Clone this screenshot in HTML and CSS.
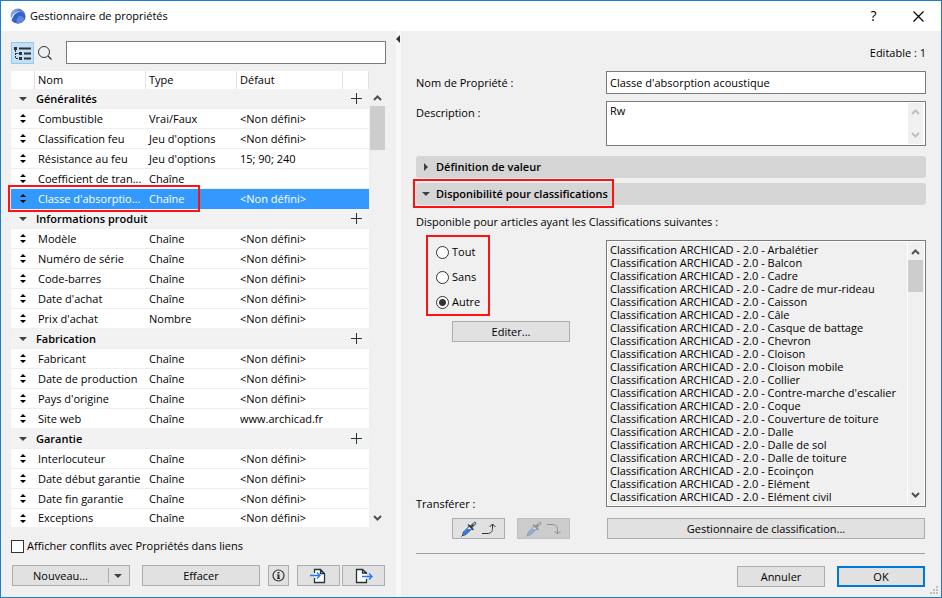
FILE: index.html
```
<!DOCTYPE html>
<html lang="fr">
<head>
    <meta charset="UTF-8">
    <title>Gestionnaire de propriétés</title>
    <link rel="stylesheet" href="styles.css">
</head>
<body>
<svg class="symbols">
    <symbol id="up" viewBox="0 0 9 6"><path d="M1 5 4.500 1.500 8 5" fill="none" stroke="currentColor" stroke-width="2"/></symbol>
    <symbol id="down" viewBox="0 0 9 6"><path d="M1 1 4.500 4.500 8 1" fill="none" stroke="currentColor" stroke-width="2"/></symbol>
    <symbol id="tri" viewBox="0 0 8 4"><path d="M0 0h8L4 4z" fill="#404040"/></symbol>
    <symbol id="sort" viewBox="0 0 6 9"><path d="M3 0 6 3H0zM3 9 0 6h6z" fill="#000"/></symbol>
    <symbol id="plus" viewBox="0 0 11 11"><path d="M5.500 0v11M0 5.500h11" stroke="#26323c"/></symbol>
    <symbol id="pipette" viewBox="0 0 16 16">
        <path d="M1.500 14.500 2.500 11 9 4.500 11.500 7 5 13.500z" fill="#e8eef2" stroke="#26323c"/>
        <path d="M2 14 3 11.300 6.300 8h4L4.800 13.200z" fill="#1e78ff"/>
        <path d="M7 3.500l5.500 5.500M9.500 6.500 12.500 3.500" fill="none" stroke="#26323c" stroke-width="1.200"/>
        <path d="M9.500 5 13 1.500c1-1 2.500.5 1.500 1.500L11 6.500" fill="none" stroke="#26323c"/>
        <path d="M.5 15.500 2 14" stroke="#26323c"/>
    </symbol>
</svg>
<div class="dialog">
    <header class="titlebar">
        <svg class="logo" width="16" height="16" viewBox="0 0 16 16">
            <path d="M1 11C-.5 5 3 .5 8 .5c1.500 0 3 .5 4 1.200C7 2 3 5.500 1 11z" fill="#7c9fe0"/>
            <path d="M1.500 12.500C3 7 6.500 3.500 10 3.500c3 0 5 2 5.500 5 0 4-3.500 7-7.500 7-2.500 0-5-1-6.500-3z" fill="#3560c6"/>
            <path d="M9 1.200c4 .3 6.500 3.300 6.600 7.300C14.500 5 12 3 8.500 3.500 6.500 4 5 5.500 4 7c1-3 2.500-5 5-5.800z" fill="#4a74cf"/>
            <path d="M6.500 15.400C6.300 11 7.500 8 10.500 8c1.800 0 3 1 4 3.500-1.500 2.700-4.700 4.300-8 3.900z" fill="#5c86de"/>
            <path d="M1.200 12C3 7 5 4.300 8.500 3.600" fill="none" stroke="#e4edfb" stroke-width=".8"/>
        </svg>
        <h1>Gestionnaire de propriétés</h1>
        <button class="title-btn" type="button">?</button>
        <button class="title-btn" type="button" aria-label="Fermer"><svg width="11" height="11" viewBox="0 0 11 11"><path d="M.5.5l10 10M10.500.5l-10 10" stroke="#000" stroke-width="1.200"/></svg></button>
    </header>
    <div class="panes">
        <section class="left">
            <div class="search">
                <button class="tree-btn" type="button" aria-label="Arborescence">
                    <svg width="17" height="14" viewBox="0 0 17 14"><path d="M0 1h3v3H0zM5 6h3v3H5zM5 11h3v3H5zM5 1.500h12v2H5zM10 6.500h7v2h-7zM10 11.500h7v2h-7z" fill="#26323c"/><path d="M1.500 4v8.500H5M1.500 7.500H5" fill="none" stroke="#26323c" stroke-dasharray="2 1"/></svg>
                </button>
                <label for="search"><svg width="14" height="14" viewBox="0 0 14 14"><circle cx="6" cy="6" r="5.500" fill="none" stroke="#333"/><path d="M10 10l3.500 3.500" stroke="#333" stroke-width="1.300"/></svg></label>
                <input id="search" type="text" aria-label="Rechercher">
            </div>
            <div class="list-area">
                <table class="props">
                    <colgroup><col class="c-sort"><col class="c-name"><col class="c-type"><col><col class="c-add"></colgroup>
                    <thead><tr><th></th><th>Nom</th><th>Type</th><th>Défaut</th><th></th></tr></thead>
                    <tbody>
                    <tr class="group"><td><svg class="tri"><use href="#tri"/></svg></td><th colspan="3">Généralités</th><td><button type="button" aria-label="Ajouter"><svg class="plus"><use href="#plus"/></svg></button></td></tr>
                    <tr><td><svg class="sort"><use href="#sort"/></svg></td><td>Combustible</td><td>Vrai/Faux</td><td>&lt;Non défini&gt;</td><td></td></tr>
                    <tr><td><svg class="sort"><use href="#sort"/></svg></td><td>Classification feu</td><td>Jeu d'options</td><td>&lt;Non défini&gt;</td><td></td></tr>
                    <tr><td><svg class="sort"><use href="#sort"/></svg></td><td>Résistance au feu</td><td>Jeu d'options</td><td>15; 90; 240</td><td></td></tr>
                    <tr><td><svg class="sort"><use href="#sort"/></svg></td><td>Coefficient de tran...</td><td>Chaîne</td><td></td><td></td></tr>
                    <tr class="selected"><td><svg class="sort"><use href="#sort"/></svg><span class="mark mark-row"></span></td><td>Classe d'absorptio...</td><td>Chaîne</td><td>&lt;Non défini&gt;</td><td></td></tr>
                    </tbody>
                    <tbody>
                    <tr class="group"><td><svg class="tri"><use href="#tri"/></svg></td><th colspan="3">Informations produit</th><td><button type="button" aria-label="Ajouter"><svg class="plus"><use href="#plus"/></svg></button></td></tr>
                    <tr><td><svg class="sort"><use href="#sort"/></svg></td><td>Modèle</td><td>Chaîne</td><td>&lt;Non défini&gt;</td><td></td></tr>
                    <tr><td><svg class="sort"><use href="#sort"/></svg></td><td>Numéro de série</td><td>Chaîne</td><td>&lt;Non défini&gt;</td><td></td></tr>
                    <tr><td><svg class="sort"><use href="#sort"/></svg></td><td>Code-barres</td><td>Chaîne</td><td>&lt;Non défini&gt;</td><td></td></tr>
                    <tr><td><svg class="sort"><use href="#sort"/></svg></td><td>Date d'achat</td><td>Chaîne</td><td>&lt;Non défini&gt;</td><td></td></tr>
                    <tr><td><svg class="sort"><use href="#sort"/></svg></td><td>Prix d'achat</td><td>Nombre</td><td>&lt;Non défini&gt;</td><td></td></tr>
                    </tbody>
                    <tbody>
                    <tr class="group"><td><svg class="tri"><use href="#tri"/></svg></td><th colspan="3">Fabrication</th><td><button type="button" aria-label="Ajouter"><svg class="plus"><use href="#plus"/></svg></button></td></tr>
                    <tr><td><svg class="sort"><use href="#sort"/></svg></td><td>Fabricant</td><td>Chaîne</td><td>&lt;Non défini&gt;</td><td></td></tr>
                    <tr><td><svg class="sort"><use href="#sort"/></svg></td><td>Date de production</td><td>Chaîne</td><td>&lt;Non défini&gt;</td><td></td></tr>
                    <tr><td><svg class="sort"><use href="#sort"/></svg></td><td>Pays d'origine</td><td>Chaîne</td><td>&lt;Non défini&gt;</td><td></td></tr>
                    <tr><td><svg class="sort"><use href="#sort"/></svg></td><td>Site web</td><td>Chaîne</td><td>www.archicad.fr</td><td></td></tr>
                    </tbody>
                    <tbody>
                    <tr class="group"><td><svg class="tri"><use href="#tri"/></svg></td><th colspan="3">Garantie</th><td><button type="button" aria-label="Ajouter"><svg class="plus"><use href="#plus"/></svg></button></td></tr>
                    <tr><td><svg class="sort"><use href="#sort"/></svg></td><td>Interlocuteur</td><td>Chaîne</td><td>&lt;Non défini&gt;</td><td></td></tr>
                    <tr><td><svg class="sort"><use href="#sort"/></svg></td><td>Date début garantie</td><td>Chaîne</td><td>&lt;Non défini&gt;</td><td></td></tr>
                    <tr><td><svg class="sort"><use href="#sort"/></svg></td><td>Date fin garantie</td><td>Chaîne</td><td>&lt;Non défini&gt;</td><td></td></tr>
                    <tr><td><svg class="sort"><use href="#sort"/></svg></td><td>Exceptions</td><td>Chaîne</td><td>&lt;Non défini&gt;</td><td></td></tr>
                    </tbody>
                </table>
                <div class="scroll"><svg class="arrow"><use href="#up"/></svg><div class="thumb"></div><svg class="arrow"><use href="#down"/></svg></div>
            </div>
            <label class="conflicts"><input type="checkbox">Afficher conflits avec Propriétés dans liens</label>
            <div class="actions">
                <button class="btn new" type="button"><span>Nouveau...</span><i></i><svg class="tri"><use href="#tri"/></svg></button>
                <button class="btn delete" type="button">Effacer</button>
                <button class="btn info" type="button" aria-label="Informations"><svg width="13" height="13" viewBox="0 0 13 13"><circle cx="6.500" cy="6.500" r="5.500" fill="none" stroke="#333" stroke-width="1.200"/><path d="M5.500 3h2v1.500h-2zM5 5.500h2.500V9H8v1H5V9h.5V6.500H5z" fill="#333"/></svg></button>
                <button class="btn file" type="button" aria-label="Importer"><svg width="17" height="16" viewBox="0 0 17 16"><path d="M4.500 5V1.500h6l4 4v9h-10V10M10.500 1.500v4h4" fill="#fff" stroke="#26323c" stroke-width="1.300"/><path d="M0 7.500h10M7 4.500l3 3-3 3" fill="none" stroke="#1e78ff" stroke-width="1.300"/></svg></button>
                <button class="btn file" type="button" aria-label="Exporter"><svg width="18" height="16" viewBox="0 0 18 16"><path d="M11.500 6V5l-4-3.500h-6v13h10V11M7.500 1.500V5h4" fill="#fff" stroke="#26323c" stroke-width="1.300"/><path d="M7 8.500h10M14 5.500l3 3-3 3" fill="none" stroke="#1e78ff" stroke-width="1.300"/></svg></button>
            </div>
        </section>
        <div class="splitter"><svg width="4" height="8" viewBox="0 0 4 8"><path d="M4 0v8L0 4z" fill="#333"/></svg></div>
        <section class="right">
            <p class="editable">Editable : 1</p>
            <div class="form">
                <label for="nom">Nom de Propriété :</label>
                <input id="nom" type="text" value="Classe d'absorption acoustique">
                <label for="desc">Description :</label>
                <div class="desc">
                    <textarea id="desc">Rw</textarea>
                    <div class="scroll off"><svg class="arrow"><use href="#up"/></svg><svg class="arrow"><use href="#down"/></svg></div>
                </div>
            </div>
            <button class="fold" type="button"><svg width="4" height="8" viewBox="0 0 4 8"><path d="M0 0v8l4-4z" fill="#404040"/></svg>Définition de valeur</button>
            <button class="fold" type="button"><svg class="tri"><use href="#tri"/></svg>Disponibilité pour classifications<span class="mark mark-fold"></span></button>
            <p class="hint">Disponible pour articles ayant les Classifications suivantes :</p>
            <div class="avail">
                <div class="choices">
                    <div class="radios">
                        <label><input type="radio" name="dispo">Tout</label>
                        <label><input type="radio" name="dispo">Sans</label>
                        <label><input type="radio" name="dispo" checked>Autre</label>
                    </div>
                    <button class="btn edit" type="button">Editer...</button>
                    <p class="transfer">Transférer :</p>
                    <div class="pickers">
                        <button class="btn" type="button" aria-label="Prélever"><svg width="16" height="16"><use href="#pipette"/></svg><svg width="15" height="12" viewBox="0 0 15 12"><path d="M0 10.500h5c4 0 5.500-2 5.500-5V1M7.500 4l3-3 3 3" fill="none" stroke="#26323c"/></svg></button>
                        <button class="btn" type="button" aria-label="Injecter" disabled><svg width="16" height="16"><use href="#pipette"/></svg><svg width="15" height="12" viewBox="0 0 15 12"><path d="M0 1.500h5c4 0 5.500 2 5.500 5V11M7.500 8l3 3 3-3" fill="none" stroke="#26323c"/></svg></button>
                    </div>
                </div>
                <div class="classes">
                    <div class="listbox">
                        <ul>
                            <li>Classification ARCHICAD - 2.0 - Arbalétier</li>
                            <li>Classification ARCHICAD - 2.0 - Balcon</li>
                            <li>Classification ARCHICAD - 2.0 - Cadre</li>
                            <li>Classification ARCHICAD - 2.0 - Cadre de mur-rideau</li>
                            <li>Classification ARCHICAD - 2.0 - Caisson</li>
                            <li>Classification ARCHICAD - 2.0 - Câle</li>
                            <li>Classification ARCHICAD - 2.0 - Casque de battage</li>
                            <li>Classification ARCHICAD - 2.0 - Chevron</li>
                            <li>Classification ARCHICAD - 2.0 - Cloison</li>
                            <li>Classification ARCHICAD - 2.0 - Cloison mobile</li>
                            <li>Classification ARCHICAD - 2.0 - Collier</li>
                            <li>Classification ARCHICAD - 2.0 - Contre-marche d'escalier</li>
                            <li>Classification ARCHICAD - 2.0 - Coque</li>
                            <li>Classification ARCHICAD - 2.0 - Couverture de toiture</li>
                            <li>Classification ARCHICAD - 2.0 - Dalle</li>
                            <li>Classification ARCHICAD - 2.0 - Dalle de sol</li>
                            <li>Classification ARCHICAD - 2.0 - Dalle de toiture</li>
                            <li>Classification ARCHICAD - 2.0 - Ecoinçon</li>
                            <li>Classification ARCHICAD - 2.0 - Elément</li>
                            <li>Classification ARCHICAD - 2.0 - Elément civil</li>
                        </ul>
                        <div class="scroll"><svg class="arrow"><use href="#up"/></svg><div class="thumb"></div><svg class="arrow"><use href="#down"/></svg></div>
                    </div>
                    <button class="btn" type="button">Gestionnaire de classification...</button>
                </div>
            </div>
            <footer>
                <button class="btn" type="button">Annuler</button>
                <button class="btn ok" type="button">OK</button>
            </footer>
        </section>
    </div>
    <svg class="grip" width="8" height="8" viewBox="0 0 8 8"><path d="M6 0h2v2H6zM3 3h2v2H3zM6 3h2v2H6zM0 6h2v2H0zM3 6h2v2H3zM6 6h2v2H6z" fill="#bfbfbf"/></svg>
</div>
</body>
</html>
```
FILE: styles.css
```
*{
    box-sizing: border-box;
}
body{
    margin: 0;
    background: #f0f0f0;
}
body, button, input, textarea{
    font-family: "Open Sans", "Noto Sans", sans-serif;
    font-size: 11px;
    line-height: 16px;
    color: #000;
}
h1, p, ul{
    margin: 0;
    padding: 0;
}
svg{
    display: block;
    flex: none;
}
.symbols{
    position: absolute;
    width: 0;
    height: 0;
}
.dialog{
    position: relative;
    display: flex;
    flex-direction: column;
    min-height: 100vh;
    border: 1px solid #1a7fd4;
    background: #f0f0f0;
}

/* title bar */
.titlebar{
    display: flex;
    align-items: center;
    height: 30px;
    padding-left: 9px;
    background: #fff;
}
.titlebar h1{
    flex: 1;
    margin-left: 4px;
    font-size: 11px;
    font-weight: normal;
}
.title-btn{
    display: flex;
    align-items: center;
    justify-content: center;
    width: 45px;
    height: 30px;
    border: 0;
    padding: 0;
    background: none;
    font-size: 14px;
}

.panes{
    display: flex;
    flex: 1;
}
.left{
    width: 395px;
    padding: 10px;
}
.splitter{
    width: 5px;
    padding-top: 4px;
    background: #f8f8f8;
}
.right{
    flex: 1;
    min-width: 0;
    padding: 14px 15px 10px;
    display: flex;
    flex-direction: column;
}

/* shared controls */
input[type=text]{
    height: 23px;
    border: 1px solid #7a7a7a;
    padding: 0 3px;
    background: #fff;
}
.btn{
    display: flex;
    align-items: center;
    justify-content: center;
    height: 21px;
    padding: 0;
    border: 1px solid #adadad;
    background: #e1e1e1;
}
.btn:disabled{
    border-color: #bfbfbf;
    background: #ccc;
}
.btn:disabled svg{
    opacity: .4;
}
.tri{
    width: 8px;
    height: 4px;
}
.sort{
    width: 6px;
    height: 9px;
}
.plus{
    width: 11px;
    height: 11px;
}
.arrow{
    width: 9px;
    height: 6px;
    color: #505050;
}
.scroll{
    display: flex;
    flex-direction: column;
    align-items: center;
    width: 15px;
    padding: 6px 0;
}
.scroll .thumb{
    width: 15px;
    margin: 5px 0 auto;
    background: #cdcdcd;
}
.mark{
    position: absolute;
    border: 2px solid #f11;
    pointer-events: none;
}

/* left pane */
.search{
    display: flex;
    align-items: center;
}
.tree-btn{
    display: flex;
    align-items: center;
    justify-content: center;
    width: 23px;
    height: 22px;
    margin-right: 4px;
    padding: 0;
    border: 1px solid #90c8f6;
    background: #c5dff5;
}
.search input{
    flex: 1;
    margin-left: 14px;
}
.list-area{
    display: flex;
    margin-top: 7px;
}
.props{
    flex: 1;
    table-layout: fixed;
    border-spacing: 0;
    background: #fff;
}
.c-sort{
    width: 24px;
}
.c-name{
    width: 111px;
}
.c-type{
    width: 91px;
}
.c-add{
    width: 26px;
}
.props th, .props td{
    height: 20px;
    padding: 0 0 0 3px;
    border-bottom: 1px solid #efefef;
    text-align: left;
    white-space: nowrap;
}
.props thead th{
    height: 18px;
    border-right: 1px solid #e2e2e2;
    border-bottom: 0;
    font-weight: normal;
}
.props td:first-child{
    position: relative;
    padding: 0;
}
.props td:first-child svg{
    margin: 0 auto;
}
.props .group > *{
    background: #f2f2f2;
}
.props .group th{
    padding-left: 1px;
    font-weight: 600;
}
.props .group button{
    display: block;
    margin: 0 auto;
    padding: 0;
    border: 0;
    background: none;
}
.props .group td{
    padding: 0;
}
.props .selected td{
    border-color: #3399ff;
    background: #3399ff;
    color: #fff;
}
.props tbody:last-child tr:last-child td{
    height: 18px;
    border-bottom: 0;
}
.mark-row{
    left: -3px;
    top: -4px;
    width: 192px;
    height: 27px;
    z-index: 1;
}
.list-area .scroll{
    margin: 18px 1px 0;
}
.list-area .thumb{
    height: 44px;
}
.conflicts{
    display: flex;
    align-items: center;
    gap: 3px;
    margin-top: 11px;
}
.conflicts input{
    appearance: none;
    width: 13px;
    height: 13px;
    margin: 0;
    border: 1px solid #333;
    background: #fff;
}
.actions{
    display: flex;
    margin-top: 11px;
    padding-left: 1px;
}
.new{
    width: 118px;
    margin-right: 12px;
}
.new span{
    flex: 1;
}
.new i{
    width: 1px;
    height: 15px;
    background: #adadad;
}
.new svg{
    margin: 0 7px 0 5px;
}
.delete{
    width: 118px;
    margin-right: 8px;
}
.info{
    width: 21px;
    margin-right: 8px;
}
.file{
    width: 43px;
}
.file + .file{
    margin-left: 2px;
}

/* right pane */
.editable{
    text-align: right;
}
.form{
    display: grid;
    grid-template-columns: 190px 1fr;
    row-gap: 7px;
    margin-top: 10px;
    line-height: 23px;
}
.desc{
    display: flex;
    height: 45px;
    padding: 1px;
    border: 1px solid #7a7a7a;
    background: #fff;
}
.desc textarea{
    flex: 1;
    border: 0;
    padding: 0 2px;
    resize: none;
    outline: 0;
}
.desc .scroll{
    margin-right: 1px;
}
.scroll.off{
    justify-content: space-between;
    background: #f0f0f0;
}
.off .arrow{
    color: #bfbfbf;
}
.fold{
    position: relative;
    display: flex;
    align-items: center;
    height: 22px;
    margin-top: 10px;
    padding: 0 0 0 20px;
    border: 0;
    border-radius: 3px;
    background: #d5d5d5;
    font-weight: 600;
}
.fold svg{
    width: 8px;
    margin: 0 6px 0 -14px;
}
.fold + .fold{
    margin-top: 5px;
}
.mark-fold{
    left: -3px;
    top: -4px;
    width: 201px;
    height: 29px;
}
.hint{
    margin-top: 9px;
}
.avail{
    display: grid;
    grid-template-columns: 190px 1fr;
    margin-top: 10px;
}
.choices{
    display: flex;
    flex-direction: column;
    padding-left: 36px;
}
.radios{
    display: flex;
    flex-direction: column;
    align-self: flex-start;
    gap: 9px;
    margin: -5px 0 5px -26px;
    padding: 7px 8px 4px;
    border: 2px solid #f11;
}
.radios label{
    display: flex;
    align-items: center;
    gap: 3px;
}
.radios input{
    appearance: none;
    width: 13px;
    height: 13px;
    margin: 0;
    border: 1px solid #333;
    border-radius: 50%;
    background: #fff;
}
.radios input:checked{
    background: radial-gradient(circle, #333 3px, #fff 4px);
}
.edit{
    width: 118px;
}
.transfer{
    margin: auto 0 6px -36px;
}
.pickers{
    display: flex;
    gap: 12px;
}
.pickers .btn{
    width: 53px;
    gap: 5px;
}
.listbox{
    display: flex;
    padding: 2px;
    border: 1px solid #7a7a7a;
    outline: 1px solid #fff;
    outline-offset: -2px;
}
.listbox ul{
    flex: 1;
    padding: 0 1px 1px;
    border-right: 1px solid #fff;
    list-style: none;
    line-height: 13px;
    white-space: nowrap;
}
.listbox .thumb{
    height: 32px;
}
.classes{
    display: flex;
    flex-direction: column;
}
.classes .btn{
    margin: 11px 1px 0;
}
footer{
    display: flex;
    justify-content: flex-end;
    gap: 12px;
    margin: auto 1px 0 0;
    padding-top: 12px;
    border-top: 1px solid #a0a0a0;
}
footer .btn{
    width: 88px;
}
footer .ok{
    border: 2px solid #0078d7;
}
.grip{
    position: absolute;
    right: 3px;
    bottom: 3px;
}
```
